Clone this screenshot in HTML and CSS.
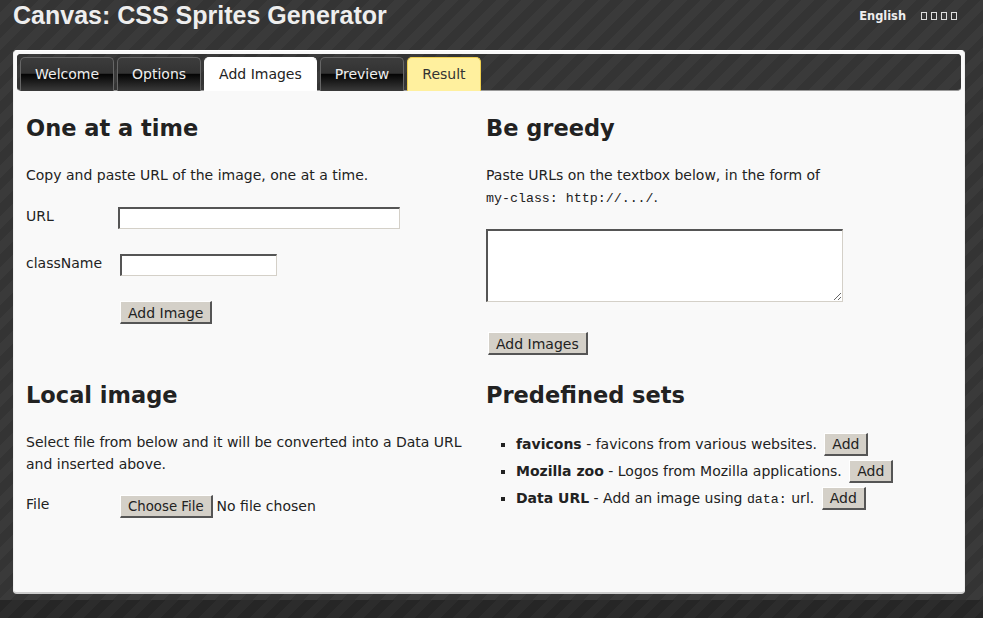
FILE: index.html
```html
<!DOCTYPE html>
<html lang="en">

<head>
    <meta charset="UTF-8">
    <meta name="viewport" content="width=device-width, initial-scale=1.0">
    <title>Canvas: CSS Sprites Generator</title>
    <link rel="stylesheet" href="styles.css">
</head>

<body>
    <header class="top">
        <h1>Canvas: CSS Sprites Generator</h1>
        <div class="lang">
            <span class="lang-current">English</span>
            <span class="lang-others"><i></i><i></i><i></i><i></i></span>
        </div>
    </header>

    <main class="card">
        <nav class="tabs">
            <a class="tab">Welcome</a>
            <a class="tab">Options</a>
            <a class="tab tab-active">Add Images</a>
            <a class="tab">Preview</a>
            <a class="tab tab-result">Result</a>
        </nav>

        <div class="panels">
            <section class="panel">
                <h2>One at a time</h2>
                <p>Copy and paste URL of the image, one at a time.</p>
                <div class="form-row row-url">
                    <label for="url">URL</label>
                    <input type="text" id="url" class="input-url">
                </div>
                <div class="form-row row-class">
                    <label for="className">className</label>
                    <input type="text" id="className" class="input-class">
                </div>
                <div class="form-row row-submit">
                    <button type="button" class="btn">Add Image</button>
                </div>
            </section>

            <section class="panel">
                <h2>Be greedy</h2>
                <p class="greedy-text">Paste URLs on the textbox below, in the form of<br><code>my-class: http://.../</code>.</p>
                <textarea class="bulk"></textarea>
                <div class="bulk-submit">
                    <button type="button" class="btn">Add Images</button>
                </div>
            </section>

            <section class="panel">
                <h2>Local image</h2>
                <p>Select file from below and it will be converted into a Data URL and inserted above.</p>
                <div class="form-row row-file">
                    <label for="file">File</label>
                    <input type="file" id="file" class="input-file">
                </div>
            </section>

            <section class="panel">
                <h2>Predefined sets</h2>
                <ul class="sets">
                    <li><strong>favicons</strong> - favicons from various websites. <button type="button" class="btn">Add</button></li>
                    <li><strong>Mozilla zoo</strong> - Logos from Mozilla applications. <button type="button" class="btn">Add</button></li>
                    <li><strong>Data URL</strong> - Add an image using <code>data:</code> url. <button type="button" class="btn">Add</button></li>
                </ul>
            </section>
        </div>
    </main>

    <footer class="bottom"></footer>
</body>

</html>
```

FILE: styles.css
```css
* {
    margin: 0;
    padding: 0;
    box-sizing: border-box;
}

html,
body {
    height: 618px;
    overflow: hidden;
}

body {
    display: flex;
    flex-direction: column;
    font-family: 'DejaVu Sans', Verdana, sans-serif;
    font-size: 14px;
    color: #222;
    background-color: #363636;
    background-image: repeating-linear-gradient(135deg, #343434 0, #343434 9px, #3a3a3a 9px, #3a3a3a 18px);
}

.top {
    height: 50px;
    padding: 0 26px 0 13px;
    display: flex;
    justify-content: space-between;
    color: #eee;
}

h1 {
    font-family: 'Liberation Sans', Arial, sans-serif;
    font-size: 25px;
    line-height: 31px;
    font-weight: 700;
    color: #eee;
}

.lang {
    display: flex;
    align-items: center;
    gap: 15px;
    height: 32px;
}

.lang-current {
    font-size: 11.4px;
    font-weight: 700;
}

.lang-others {
    display: flex;
    gap: 4px;
}

.lang-others i {
    width: 6px;
    height: 8px;
    border: 1px solid #ddd;
}

.card {
    width: 952px;
    height: 544px;
    margin-left: 13px;
    padding: 4px 3px 0;
    background-color: #f9f9f9;
    border-top: 1px solid #fff;
    border-left: 1px solid #eee;
    border-right: 1px solid #eee;
    border-bottom: 2px solid #ccc;
    border-radius: 4px;
}

.tabs {
    height: 37px;
    margin: -1px 0 0;
    padding: 3px 0 0 3px;
    display: flex;
    gap: 3px;
    background-color: #363636;
    background-image: repeating-linear-gradient(135deg, #343434 0, #343434 9px, #3a3a3a 9px, #3a3a3a 18px);
    border-bottom: 1px solid #999;
    border-radius: 4px;
}

.tab {
    height: 34px;
    padding: 0 14px 2px;
    display: flex;
    align-items: center;
    color: #eee;
    border: 1px solid #666;
    border-bottom: none;
    border-radius: 5px 5px 0 0;
    background: linear-gradient(#3c3c3c 0, #333 46%, #050505 50%, #3a3a3a 100%);
}

.tab-active {
    color: #222;
    background: #fff;
    border-color: #fff;
}

.tab-result {
    color: #333;
    background: #fff09e;
    border-color: #f0d050;
}

.panels {
    display: grid;
    grid-template-columns: 460px 1fr;
    grid-template-rows: 267px 1fr;
    padding: 24px 0 0 9px;
}

h2 {
    font-size: 22.5px;
    line-height: 26px;
    font-weight: 700;
    color: #222;
    margin-bottom: 23px;
}

.panel p {
    line-height: 22px;
    max-width: 440px;
}

.form-row {
    display: flex;
    align-items: flex-start;
}

.form-row label {
    line-height: 19px;
}

.row-url {
    margin-top: 21px;
}

.row-url label {
    width: 92px;
}

.row-class {
    margin-top: 25px;
}

.row-class label {
    width: 94px;
}

.row-submit {
    margin-top: 25px;
    padding-left: 94px;
}

input[type="text"],
.bulk {
    display: block;
    background: #fff;
    border-width: 2px 1px 1px 2px;
    border-style: solid;
    border-color: #555 #d4d0c8 #d4d0c8 #555;
    border-radius: 0;
    outline: none;
}

.input-url {
    width: 282px;
    height: 22px;
}

.input-class {
    width: 157px;
    height: 22px;
}

.btn,
.input-file::file-selector-button {
    height: 23px;
    padding: 1px 7px 0;
    font-family: 'DejaVu Sans', Verdana, sans-serif;
    font-size: 14px;
    color: #222;
    background: #d4d0c8;
    border-width: 1px 2px 2px 1px;
    border-style: solid;
    border-color: #fff #555 #555 #fff;
    border-radius: 0;
}

code {
    font-family: 'Liberation Mono', 'DejaVu Sans Mono', monospace;
    font-size: 13.3px;
}

.bulk {
    width: 357px;
    height: 73px;
    margin-top: 19px;
}

.bulk-submit {
    margin-top: 30px;
    padding-left: 2px;
}

.row-file {
    margin-top: 20px;
}

.row-file label {
    width: 94px;
}

.input-file {
    font-family: 'DejaVu Sans', Verdana, sans-serif;
    font-size: 14px;
    color: #222;
}

.input-file::file-selector-button {
    margin-right: 4px;
    font-size: 13.3px;
}

.sets {
    list-style: square;
    margin-left: 30px;
}

.sets li {
    height: 27px;
    line-height: 27px;
}

.sets .btn {
    margin-left: 3px;
}

.bottom {
    flex-grow: 1;
    margin-top: 6px;
    background-color: #292929;
    background-image: repeating-linear-gradient(135deg, #262626 0, #262626 9px, #2c2c2c 9px, #2c2c2c 18px);
}
```
